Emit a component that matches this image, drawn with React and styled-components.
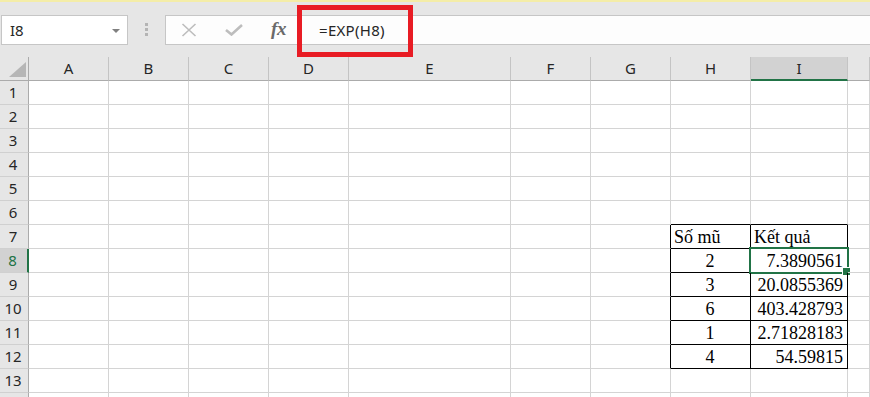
import React from "react";
import styled, { createGlobalStyle, css } from "styled-components";

const Global = createGlobalStyle`
  html, body { margin: 0; padding: 0; background: #ffffff; overflow: hidden; }
  * { box-sizing: border-box; }
`;

const GREEN = "#217346";
const GRID = "#d4d4d4";

const Page = styled.div`
  width: 870px;
  height: 397px;
  overflow: hidden;
  background: #ffffff;
  font-family: "Noto Sans", "Open Sans", sans-serif;
`;

const Toolbar = styled.div`
  height: 57px;
  background: #e6e6e6;
  border-top: 2px solid #f4eda8;
  padding-top: 13px;
  display: flex;
  align-items: flex-start;
`;

const NameBox = styled.div`
  margin-left: 1px;
  width: 127px;
  height: 30px;
  background: #ffffff;
  border: 1px solid #c6c6c6;
  display: flex;
  align-items: center;
  justify-content: space-between;
  padding: 0 7px 0 8px;
  font-size: 15px;
  color: #262626;
`;

const Arrow = styled.span`
  width: 0;
  height: 0;
  border-left: 4px solid transparent;
  border-right: 4px solid transparent;
  border-top: 4px solid #808080;
  margin-top: 1px;
`;

const Grip = styled.div`
  margin-left: 17px;
  margin-top: 8px;
  width: 3px;
  display: flex;
  flex-direction: column;
  gap: 2px;
`;

const GripDot = styled.span`
  width: 3px;
  height: 3px;
  background: #b4b4b4;
`;

const FormulaBar = styled.div`
  position: relative;
  margin-left: 17px;
  flex: 1;
  height: 30px;
  background: #fdfdfd;
  border: 1px solid #c6c6c6;
  border-right: none;
  display: flex;
  align-items: center;
`;

const IconSlot = styled.div`
  width: 45px;
  height: 28px;
  display: flex;
  align-items: center;
  justify-content: center;
  flex-shrink: 0;
`;

const Fx = styled.span`
  font-family: "Liberation Serif", "DejaVu Serif", serif;
  font-style: italic;
  font-weight: bold;
  font-size: 19px;
  color: #6a6a6a;
  letter-spacing: -0.5px;
  margin-top: -3px;
`;

const FormulaText = styled.div`
  padding-left: 18px;
  font-size: 15px;
  color: #262626;
  letter-spacing: 0.3px;
`;

const Highlight = styled.div`
  position: absolute;
  left: 131px;
  top: -11px;
  width: 116px;
  height: 52px;
  border: 5px solid #e81c24;
  pointer-events: none;
`;

const Sheet = styled.div`
  display: grid;
  grid-template-columns: 29px 80px 80px 80px 80px 162px 80px 80px 80px 97px 1fr;
  grid-auto-rows: 24px;
`;

const Corner = styled.div`
  background: #e6e6e6;
  border-right: 1px solid #ababab;
  border-bottom: 1px solid #ababab;
  display: flex;
  align-items: flex-end;
  justify-content: flex-end;
  padding: 0 2px 3px 0;
`;

const ColHead = styled.div`
  background: ${(p) => (p.$active ? "#d2d2d2" : "#e6e6e6")};
  border-right: 1px solid #c4c4c4;
  border-bottom: ${(p) => (p.$active ? `2px solid ${GREEN}` : "1px solid #ababab")};
  font-size: 15px;
  color: #262626;
  text-align: center;
  line-height: 23px;
`;

const RowHead = styled.div`
  background: ${(p) => (p.$active ? "#d2d2d2" : "#e6e6e6")};
  border-right: ${(p) => (p.$active ? `2px solid ${GREEN}` : "1px solid #ababab")};
  border-bottom: 1px solid #d0d0d0;
  font-size: 15px;
  color: ${(p) => (p.$active ? GREEN : "#262626")};
  text-align: center;
  padding-right: 2px;
  line-height: 23px;
`;

const Cell = styled.div`
  position: relative;
  border-right: 1px solid ${(p) => (p.$rb ? "#000000" : GRID)};
  border-bottom: 1px solid ${(p) => (p.$bb ? "#000000" : GRID)};
  font-family: "Liberation Serif", "Times New Roman", serif;
  font-size: 18px;
  color: #000000;
  padding: 2px 4px 0 3px;
  line-height: 21px;
  white-space: nowrap;
  text-align: ${(p) => p.$align || "left"};
  ${(p) =>
    p.$selected &&
    css`
      &::before {
        content: "";
        position: absolute;
        left: -2px;
        top: -2px;
        right: -2px;
        bottom: -2px;
        border: 2px solid ${GREEN};
      }
      &::after {
        content: "";
        position: absolute;
        right: -4px;
        bottom: -4px;
        width: 7px;
        height: 7px;
        background: ${GREEN};
        border: 1px solid #ffffff;
      }
    `}
`;

const cols = ["A", "B", "C", "D", "E", "F", "G", "H", "I", "J"];

const tableData = {
  7: ["Số mũ", "Kết quả"],
  8: ["2", "7.3890561"],
  9: ["3", "20.0855369"],
  10: ["6", "403.428793"],
  11: ["1", "2.71828183"],
  12: ["4", "54.59815"],
};

const CornerTriangle = () => (
  <svg width="17" height="15" viewBox="0 0 17 15">
    <polygon points="17,0 17,15 0,15" fill="#b6b6b6" />
  </svg>
);

const XIcon = () => (
  <svg width="16" height="14" viewBox="0 0 16 14">
    <path d="M1.5 1 L14.5 13 M14.5 1 L1.5 13" stroke="#bdbdbd" strokeWidth="1.6" fill="none" />
  </svg>
);

const CheckIcon = () => (
  <svg width="18" height="12" viewBox="0 0 18 12">
    <path d="M1 6 L6.5 10.5 L17 1" stroke="#bdbdbd" strokeWidth="2.6" fill="none" />
  </svg>
);

export default function App() {
  const rows = Array.from({ length: 14 }, (_, i) => i + 1);
  return (
    <Page>
      <Global />
      <Toolbar>
        <NameBox>
          <span>I8</span>
          <Arrow />
        </NameBox>
        <Grip>
          <GripDot />
          <GripDot />
          <GripDot />
        </Grip>
        <FormulaBar>
          <IconSlot>
            <XIcon />
          </IconSlot>
          <IconSlot>
            <CheckIcon />
          </IconSlot>
          <IconSlot>
            <Fx>fx</Fx>
          </IconSlot>
          <FormulaText>=EXP(H8)</FormulaText>
          <Highlight />
        </FormulaBar>
      </Toolbar>
      <Sheet>
        <Corner>
          <CornerTriangle />
        </Corner>
        {cols.map((c) => (
          <ColHead key={c} $active={c === "I"}>
            {c === "J" ? "" : c}
          </ColHead>
        ))}
        {rows.map((r) => (
          <React.Fragment key={r}>
            <RowHead $active={r === 8}>{r <= 13 ? r : ""}</RowHead>
            {cols.map((c) => {
              const inTable = r >= 7 && r <= 12;
              const isTableCol = c === "H" || c === "I";
              const rb = inTable && (c === "G" || isTableCol);
              const bb = (r === 6 && isTableCol) || (inTable && isTableCol);
              let text = "";
              let align = "left";
              if (inTable && isTableCol) {
                text = tableData[r][c === "H" ? 0 : 1];
                if (r > 7) align = c === "H" ? "center" : "right";
              }
              return (
                <Cell
                  key={c}
                  $rb={rb}
                  $bb={bb}
                  $align={align}
                  $selected={r === 8 && c === "I"}
                >
                  {text}
                </Cell>
              );
            })}
          </React.Fragment>
        ))}
      </Sheet>
    </Page>
  );
}
